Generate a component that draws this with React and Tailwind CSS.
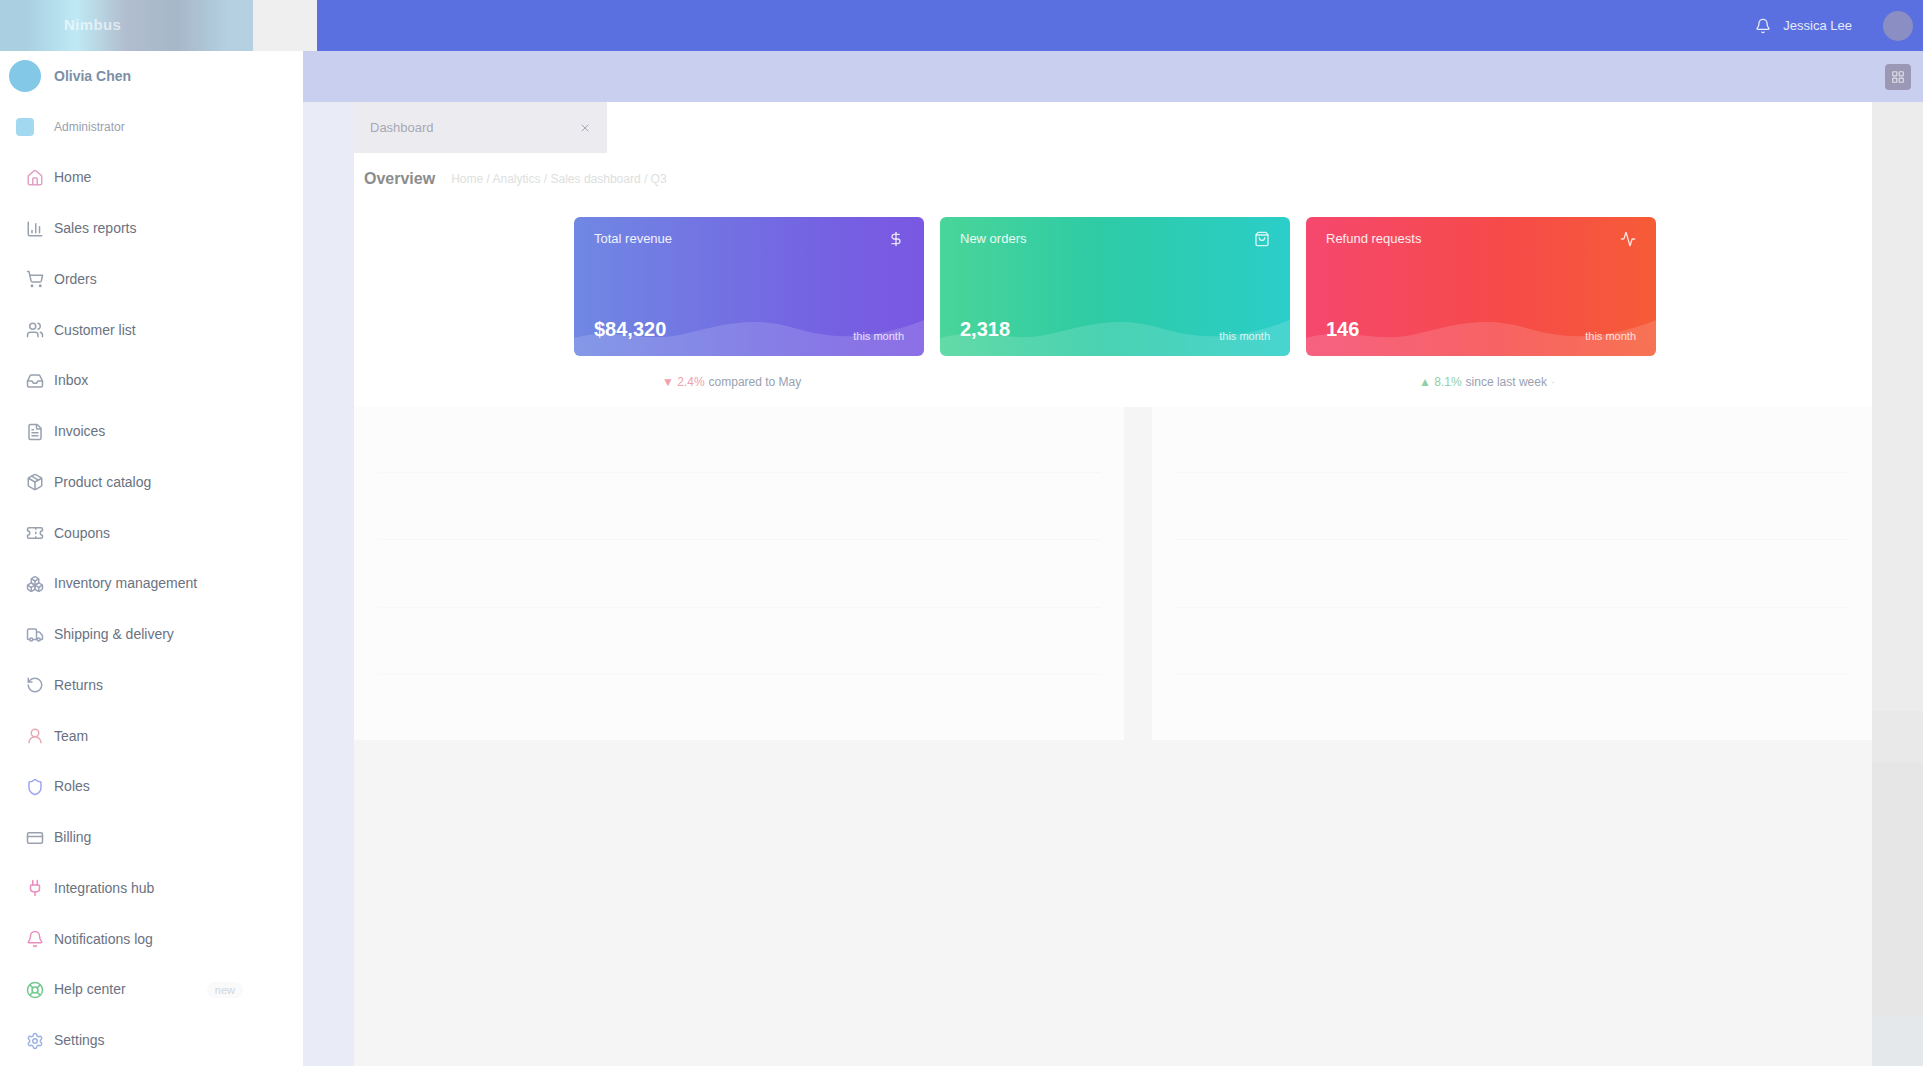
import {
  House,
  ChartColumn,
  ShoppingCart,
  Users,
  Inbox,
  FileText,
  Package,
  Ticket,
  Boxes,
  Truck,
  RotateCcw,
  UserRound,
  Shield,
  CreditCard,
  Plug,
  Bell,
  LifeBuoy,
  Settings,
  X,
  DollarSign,
  Activity,
  ShoppingBag,
  LayoutGrid,
} from "lucide-react";

const navItems = [
  { icon: House, label: "Home", tint: "text-[#e2a4c4]" },
  { icon: ChartColumn, label: "Sales reports", tint: "text-gray-400" },
  { icon: ShoppingCart, label: "Orders", tint: "text-gray-400" },
  { icon: Users, label: "Customer list", tint: "text-gray-400" },
  { icon: Inbox, label: "Inbox", tint: "text-gray-400" },
  { icon: FileText, label: "Invoices", tint: "text-gray-400" },
  { icon: Package, label: "Product catalog", tint: "text-gray-400" },
  { icon: Ticket, label: "Coupons", tint: "text-gray-400" },
  { icon: Boxes, label: "Inventory management", tint: "text-[#9aa3b8]" },
  { icon: Truck, label: "Shipping & delivery", tint: "text-[#9aa3b8]" },
  { icon: RotateCcw, label: "Returns", tint: "text-[#9aa3b8]" },
  { icon: UserRound, label: "Team", tint: "text-[#e7a9b6]" },
  { icon: Shield, label: "Roles", tint: "text-[#9ea4f2]" },
  { icon: CreditCard, label: "Billing", tint: "text-gray-400" },
  { icon: Plug, label: "Integrations hub", tint: "text-[#ea8fbd]" },
  { icon: Bell, label: "Notifications log", tint: "text-[#ea8fbd]" },
  { icon: LifeBuoy, label: "Help center", tint: "text-[#72c891]", badge: true },
  { icon: Settings, label: "Settings", tint: "text-[#9db3e3]" },
];

const Sidebar = () => {
  return (
    <aside className="w-[303px] shrink-0 flex flex-col bg-white">
      <div className="h-[51px] flex">
        <div className="w-[253px] flex items-center pl-16 bg-[linear-gradient(90deg,#a9cfe0_10%,#bfe9f5_30%,#b1bdce_50%,#a6b7c9_70%,#b4d0e1_90%)]">
          <span className="text-[15px] font-bold tracking-wide text-white/60">Nimbus</span>
        </div>
        <div className="w-[50px] bg-[#efefef]" />
      </div>

      <div className="h-[50.75px] flex items-center">
        <div className="w-[50px] flex justify-center">
          <div className="w-[32px] h-[32px] rounded-full bg-[#84c8e8]" />
        </div>
        <span className="ml-1 text-[14px] font-semibold text-[#7d8fa6]">Olivia Chen</span>
      </div>
      <div className="h-[50.75px] flex items-center">
        <div className="w-[50px] flex justify-center">
          <div className="w-[18px] h-[18px] rounded bg-[#a3d9f0]" />
        </div>
        <span className="ml-1 text-[12px] text-gray-400">Administrator</span>
      </div>

      {navItems.map((item) => {
        const Icon = item.icon;
        return (
          <div key={item.label} className="h-[50.75px] flex items-center">
            <div className="w-[48px] flex justify-end pr-1">
              <Icon size={18} strokeWidth={2} className={item.tint} />
            </div>
            <span className="ml-[6px] text-[14px] text-gray-500">{item.label}</span>
            {item.badge && (
              <span className="ml-auto mr-[60px] px-2 rounded-full text-[11px] text-gray-300 bg-[#fafafa]">
                new
              </span>
            )}
          </div>
        );
      })}
    </aside>
  );
};

const Card = ({ grad, title, value, sub, icon: Icon }) => {
  return (
    <div className={`relative w-[350px] h-[139px] rounded-md overflow-hidden flex flex-col justify-between ${grad}`}>
      <svg
        className="absolute bottom-0 left-0 w-full h-[48px]"
        viewBox="0 0 350 48"
        preserveAspectRatio="none"
      >
        <path
          d="M0 30 C40 18 70 36 110 26 S180 8 220 20 S300 32 350 12 L350 48 L0 48Z"
          fill="white"
          fillOpacity="0.14"
        />
      </svg>
      <div className="relative flex items-center justify-between px-5 pt-3 text-white/90 text-[13px]">
        <span>{title}</span>
        <Icon size={16} className="text-white/80" />
      </div>
      <div className="relative flex items-end justify-between px-5 pb-3 text-white">
        <span className="text-[20px] font-bold">{value}</span>
        <span className="text-[11px] text-white/80">{sub}</span>
      </div>
    </div>
  );
};

const App = () => {
  return (
    <div className="w-full h-[1066px] flex overflow-hidden bg-white font-['Liberation_Sans',sans-serif]">
      <Sidebar />

      <main className="flex-1 flex flex-col">
        <header className="h-[51px] flex items-center bg-[#5b70e0]">
          <div className="w-[14px] h-full bg-[#efefef]" />
          <div className="flex-1" />
          <div className="flex items-center gap-3 pr-5 text-white/85 text-[13px]">
            <Bell size={16} />
            <span>Jessica Lee</span>
          </div>
          <div className="w-[51px] h-full flex items-center justify-center">
            <div className="w-[30px] h-[30px] rounded-full bg-[#8b8ec2]" />
          </div>
        </header>

        <div className="h-[51px] flex items-center bg-[#c9d0ef]">
          <div className="flex-1" />
          <div className="w-[51px] h-full flex items-center justify-center">
            <div className="w-[26px] h-[26px] rounded bg-[#9a98b4] flex items-center justify-center">
              <LayoutGrid size={14} className="text-white/70" />
            </div>
          </div>
        </div>

        <div className="flex-1 flex">
          <div className="w-[51px] shrink-0 bg-[#e9ecf6]" />

          <div className="flex-1 flex flex-col">
            <div className="h-[51px] flex">
              <div className="w-[253px] h-full bg-[#ececf0] flex items-center justify-between px-4 text-[13px] text-[#a8a8b4]">
                <span>Dashboard</span>
                <X size={12} />
              </div>
            </div>

            <div className="h-[51px] flex items-center pl-[10px] gap-4">
              <span className="text-[16px] font-semibold text-[#8c8c8c]">Overview</span>
              <span className="text-[12px] text-[#dde0dd]">Home / Analytics / Sales dashboard / Q3</span>
            </div>

            <div className="h-[152px] pt-[13px] pl-[220px] flex gap-4">
              <Card
                grad="bg-[linear-gradient(90deg,#7088e3,#7560e2_75%,#7a58e2)]"
                title="Total revenue"
                value="$84,320"
                sub="this month"
                icon={DollarSign}
              />
              <Card
                grad="bg-[linear-gradient(90deg,#4ad599,#2ecba5_45%,#2bcec9)]"
                title="New orders"
                value="2,318"
                sub="this month"
                icon={ShoppingBag}
              />
              <Card
                grad="bg-[linear-gradient(90deg,#f5486e,#f64a4a_55%,#f65c37)]"
                title="Refund requests"
                value="146"
                sub="this month"
                icon={Activity}
              />
            </div>

            <div className="h-[51px] pl-[220px] flex gap-4 text-[12px]">
              <div className="w-[350px] flex items-center pl-[88px] gap-1">
                <span className="text-[#f2a0ae]">▼ 2.4%</span>
                <span className="text-gray-400">compared to May</span>
              </div>
              <div className="w-[350px]" />
              <div className="w-[350px] flex items-center pl-[113px] gap-1">
                <span className="text-[#8fd0a6]">▲ 8.1%</span>
                <span className="text-gray-400">since last week</span>
                <span className="text-gray-300">·</span>
              </div>
            </div>

            <div className="flex-1 bg-[#f5f5f5]">
              <div className="h-[333px] flex gap-[28px]">
                <div className="w-[770px] bg-[#fcfcfc] flex flex-col justify-around px-6 py-8">
                  <div className="border-t border-[#f7f7f7]" />
                  <div className="border-t border-[#f7f7f7]" />
                  <div className="border-t border-[#f7f7f7]" />
                  <div className="border-t border-[#f7f7f7]" />
                </div>
                <div className="flex-1 bg-[#fcfcfc] flex flex-col justify-around px-6 py-8">
                  <div className="border-t border-[#f7f7f7]" />
                  <div className="border-t border-[#f7f7f7]" />
                  <div className="border-t border-[#f7f7f7]" />
                  <div className="border-t border-[#f7f7f7]" />
                </div>
              </div>
            </div>
          </div>

          <div className="w-[51px] shrink-0 flex flex-col">
            <div className="h-[609px] bg-[#ececec]" />
            <div className="h-[51px] bg-[#e9e9e9]" />
            <div className="h-[254px] bg-[#e6e6e6]" />
            <div className="flex-1 bg-[#e4e8eb]" />
          </div>
        </div>
      </main>
    </div>
  );
};

export default App;
